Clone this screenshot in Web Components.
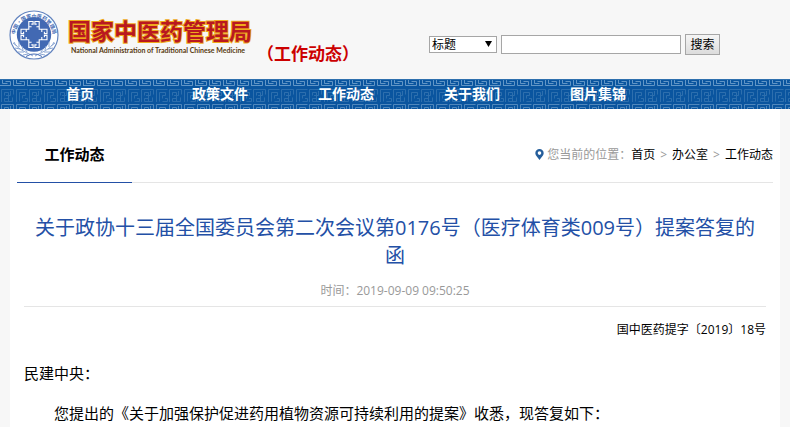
<!DOCTYPE html>
<html lang="zh-CN">
<head>
<meta charset="utf-8">
<title>国家中医药管理局 - 工作动态</title>
<style>
body { margin: 0; background: #f7f7f7; color: #000; font: 12px/20px "Open Sans", "Noto Sans CJK SC", sans-serif; }
</style>
</head>
<body>
<site-page></site-page>
<script>
function define(name, html) {
  const t = document.createElement('template');
  t.innerHTML = html;
  customElements.define(name, class extends HTMLElement {
    constructor() {
      super();
      this.attachShadow({ mode: 'open' }).append(t.content.cloneNode(true));
    }
  });
}

define('site-emblem', `
<style>:host{display:block;width:50px;height:50px} svg{display:block} text{font:bold 5px "Noto Sans CJK SC",sans-serif;fill:#4269b3}</style>
<svg width="50" height="50" viewBox="0 0 50 50" aria-hidden="true">
  <circle cx="25" cy="25" r="24" fill="#fff" stroke="#6384bf" stroke-width="1.2"/>
  <circle cx="25" cy="24.5" r="17.2" fill="#4269b3"/>
  <path id="arc" d="M6.8 32 A19 19 0 1 1 43.2 32" fill="none"/>
  <text><textPath href="#arc" startOffset="50%" text-anchor="middle">中国·国家中医药管理局</textPath></text>
  <g fill="none" stroke="#fff" stroke-width="1.1" transform="translate(25 24.5)">
    <path id="q" d="M-2.7-10.4H-.9V-13H-5.2V-7.8H-2.4M-5.2-7.8V-5.2H-7.8M-10.4-2.7V-.9H-13V-5.2H-7.8V-2.4"/>
    <use href="#q" transform="scale(-1 1)"/>
    <use href="#q" transform="scale(1 -1)"/>
    <use href="#q" transform="scale(-1 -1)"/>
  </g>
  <g fill="none" stroke="#8ba6d3" stroke-width="1">
    <path d="M5 32C8 39 15 41 24 46M45 32C42 39 35 41 26 46M8 36l-4-3M11 39l-5-1M15 42l-6 0M19 44l-5 1M10 37l0-5M14 40l-1-4M18 42l-2-3M42 36l4-3M39 39l5-1M35 42l6 0M31 44l5 1M40 37l0-5M36 40l1-4M32 42l2-3"/>
    <path d="M17 46.5Q22 43.5 25 44Q28 43.5 33 46.5" stroke="#4269b3"/>
  </g>
</svg>`);

define('site-brand', `
<style>
:host{display:flex;gap:9px;padding:10px 0 0 9px}
.name{padding-top:6px}
b{display:block;font:700 23px/28px "Noto Sans CJK SC",sans-serif;color:#b91820;-webkit-text-stroke:2px #efaa1d;paint-order:stroke fill}
small{display:block;padding-left:3px;font:bold 7px/12px "Lato",sans-serif;color:#573910;white-space:nowrap}
</style>
<site-emblem></site-emblem>
<div class="name"><b>国家中医药管理局</b><small>National Administration of Traditional Chinese Medicine</small></div>`);

define('site-search', `
<style>
form{display:flex;align-items:center;gap:4px;margin:0}
.pick{position:relative;display:flex}
select,input,button{box-sizing:border-box;margin:0;font:12px/14px "Open Sans","Noto Sans CJK SC",sans-serif;color:#000;border:1px solid #a6a6a6;border-radius:0}
select{appearance:none;width:68px;height:17px;padding:0 2px;background:#fff}
.pick svg{position:absolute;right:5px;top:5px;pointer-events:none}
input{width:180px;height:19px;background:#fff;padding:0 2px}
button{width:35px;height:21px;padding:0;background:linear-gradient(#f5f5f5,#dcdcdc)}
</style>
<form>
<span class="pick"><select aria-label="搜索范围"><option>标题</option></select><svg width="7" height="6"><path d="M0 0H7L3.5 6Z"/></svg></span>
<input type="text" aria-label="关键词">
<button type="button">搜索</button>
</form>`);

define('site-header', `
<style>
:host{display:flex;height:79px}
.channel{padding:42px 0 0 5px;font:bold 17px/24px "Open Sans","Noto Sans CJK SC",sans-serif;color:#c00;white-space:nowrap}
site-search{padding:34px 0 0 70px}
</style>
<site-brand></site-brand><div class="channel">（工作动态）</div><site-search></site-search>`);

define('site-nav', `
<style>
:host{display:block;position:relative;background:#0a559f;overflow:hidden}
svg{position:absolute;inset:0;width:100%;height:100%}
nav{position:relative;display:flex;padding:0 0 2px 66px}
a{flex:0 0 126px;font:bold 14px/28px "Noto Sans CJK SC",sans-serif;color:#fff;text-decoration:none}
</style>
<svg aria-hidden="true">
  <defs>
    <path id="key" fill="none" d="M1.5 14V1.5H13.5V6.5M12.5 9.5V13.5H4.5V10.5H8.5M4.5 7.5V4.5H8.5V13M10.5 3V7.5H6M16.5 14V1.5H27.5M19.5 13.5V4.5H25.5V7.5H22.5V10.5M22.5 13.5H27.5V10.5H25"/>
    <pattern id="bright" width="28" height="24" patternUnits="userSpaceOnUse">
      <path fill="none" stroke="#6296c6" d="M0 6.5H10.5V2.5H5.5M2.5 0V4.5H7.5M13.5 0V6.5H24.5V2.5H19.5M16.5 0V4.5H21.5M27.5 0V7"/>
      <path stroke="#2f70ae" d="M0 .5H28" />
    </pattern>
    <pattern id="dim" width="28" height="15" y="9" patternUnits="userSpaceOnUse"><use href="#key" stroke="#2d6fae"/></pattern>
    <pattern id="low" width="28" height="15" y="24" patternUnits="userSpaceOnUse"><use href="#key" stroke="#5088bd"/></pattern>
  </defs>
  <rect width="100%" height="7" fill="url(#bright)"/>
  <rect y="9" width="100%" height="14" fill="url(#dim)"/>
  <rect y="24" width="100%" height="6" fill="url(#low)"/>
</svg>
<nav><a href="#">首页</a><a href="#">政策文件</a><a href="#">工作动态</a><a href="#">关于我们</a><a href="#">图片集锦</a></nav>`);

define('site-crumbs', `
<style>
:host{display:flex;align-items:center;color:#999}
svg{margin-right:3px}
a{color:#000;text-decoration:none}
i{font-style:normal;padding:0 5px}
</style>
<svg width="9" height="11" viewBox="0 0 9 11" aria-hidden="true"><path fill="#255e9b" fill-rule="evenodd" d="M4.5 0A4.2 4.2 0 0 0 .3 4.2C.3 6.8 3 8.3 4.5 11 6 8.3 8.7 6.8 8.7 4.2A4.2 4.2 0 0 0 4.5 0ZM4.5 2.3A1.8 1.8 0 1 1 4.5 5.9 1.8 1.8 0 0 1 4.5 2.3Z"/></svg>
<span>您当前的位置：</span><a href="#">首页</a><i>&gt;</i><a href="#">办公室</a><i>&gt;</i><a href="#">工作动态</a>`);

define('section-bar', `
<style>
:host{display:flex;justify-content:space-between;margin:0 7px;border-bottom:1px solid #e5e5e5}
h2{box-sizing:border-box;width:115px;height:56px;margin:0 0 -1px;border-bottom:1px solid #2350a6;text-align:center;font:bold 15px/55px "Open Sans","Noto Sans CJK SC",sans-serif}
site-crumbs{height:55px}
</style>
<h2><slot></slot></h2><site-crumbs></site-crumbs>`);

define('news-article', `
<style>
:host{display:block;padding:31px 14px 0}
h1{margin:0;padding:0 8px;text-align:center;font:normal 20px/28px "Open Sans","Noto Sans CJK SC",sans-serif;color:#2350a6}
.date{padding:11px 0 5px;text-align:center;color:#999;border-bottom:1px solid #e5e5e5}
.number{margin:13px 0 0;text-align:right}
.body{display:grid;gap:16px;padding-top:21px;font-size:15px;line-height:24px}
::slotted(p){margin:0}
</style>
<h1><slot name="title"></slot></h1>
<div class="date"><slot name="date"></slot></div>
<p class="number"><slot name="number"></slot></p>
<div class="body"><slot></slot></div>`);

define('site-page', `
<style>
:host{display:block}
main{box-sizing:border-box;margin:0 10px;padding-top:18px;background:#fff;min-height:calc(100vh - 109px)}
.lead{text-indent:2em}
</style>
<site-header></site-header>
<site-nav></site-nav>
<main>
<section-bar>工作动态</section-bar>
<news-article>
<span slot="title">关于政协十三届全国委员会第二次会议第0176号（医疗体育类009号）提案答复的函</span>
<span slot="date">时间：2019-09-09 09:50:25</span>
<span slot="number">国中医药提字〔2019〕18号</span>
<p>民建中央：</p>
<p class="lead">您提出的《关于加强保护促进药用植物资源可持续利用的提案》收悉，现答复如下：</p>
</news-article>
</main>`);
</script>
</body>
</html>
